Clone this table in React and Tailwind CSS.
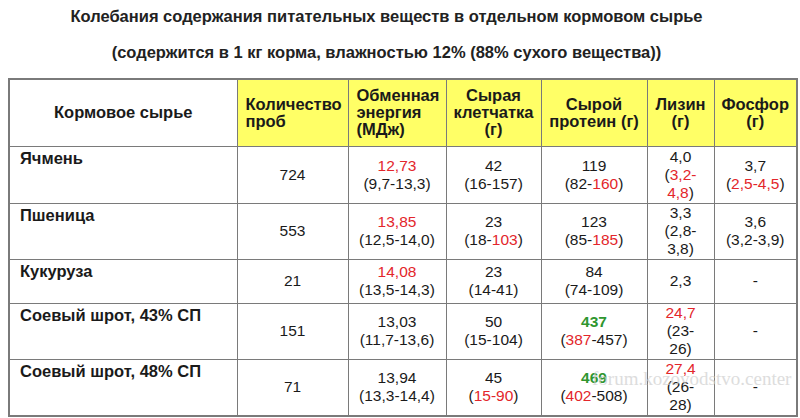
import React from 'react'

const R = ({ children }) => <span className="text-[#e3262b]">{children}</span>
const G = ({ children }) => <span className="font-bold text-[#2f962f]">{children}</span>

const rows = [
  {
    name: 'Ячмень',
    h: 'h-[57px]',
    n: '724',
    en: [<R key="a">12,73</R>, '(9,7-13,3)'],
    fib: ['42', '(16-157)'],
    prot: ['119', <>(82-<R>160</R>)</>],
    lys: ['4,0', <>(<R>3,2-</R></>, <><R>4,8</R>)</>],
    ph: ['3,7', <>(<R>2,5-4,5</R>)</>],
  },
  {
    name: 'Пшеница',
    h: 'h-[56px]',
    n: '553',
    en: [<R key="a">13,85</R>, '(12,5-14,0)'],
    fib: ['23', <>(18-<R>103</R>)</>],
    prot: ['123', <>(85-<R>185</R>)</>],
    lys: ['3,3', '(2,8-', '3,8)'],
    ph: ['3,6', '(3,2-3,9)'],
  },
  {
    name: 'Кукуруза',
    h: 'h-[44px]',
    n: '21',
    en: [<R key="a">14,08</R>, '(13,5-14,3)'],
    fib: ['23', '(14-41)'],
    prot: ['84', '(74-109)'],
    lys: ['2,3'],
    ph: ['-'],
  },
  {
    name: 'Соевый шрот, 43% СП',
    h: 'h-[56px]',
    n: '151',
    en: ['13,03', '(11,7-13,6)'],
    fib: ['50', '(15-104)'],
    prot: [<G key="a">437</G>, <>(<R>387</R>-457)</>],
    lys: [<R key="a">24,7</R>, '(23-', '26)'],
    ph: ['-'],
  },
  {
    name: 'Соевый шрот, 48% СП',
    h: 'h-[57px]',
    n: '71',
    en: ['13,94', '(13,3-14,4)'],
    fib: ['45', <>(<R>15-90</R>)</>],
    prot: [<G key="a">469</G>, <>(<R>402</R>-508)</>],
    lys: [<R key="a">27,4</R>, '(26-', '28)'],
    ph: ['-'],
  },
]

function Lines({ items }) {
  return items.map((t, i) => <div key={i}>{t}</div>)
}

const th = 'border border-[#7a7a7a] bg-[#ffff66] font-bold align-middle leading-[17px] text-[16.5px] p-0'
const td = 'border border-[#7a7a7a] text-center align-middle leading-[18px] p-0'

export default function App() {
  return (
    <div className="relative w-[800px] h-[418px] bg-white text-[15.5px] text-[#1a1a1a] overflow-hidden" style={{ fontFamily: '"Liberation Sans", Arial, sans-serif' }}>
      <div className="w-[773px] pt-[6px] text-center font-bold text-[16.5px] leading-[20px] text-[#222]">
        <div>Колебания содержания питательных веществ в отдельном кормовом сырье</div>
        <div className="mt-[16px]">(содержится в 1 кг корма, влажностью 12% (88% сухого вещества))</div>
      </div>

      <table className="ml-[8px] mt-[16px] w-[788px] table-fixed border-collapse border-2 border-[#7a7a7a]">
        <colgroup>
          <col className="w-[228px]" />
          <col className="w-[111px]" />
          <col className="w-[98px]" />
          <col className="w-[95px]" />
          <col className="w-[106px]" />
          <col className="w-[67px]" />
          <col className="w-[83px]" />
        </colgroup>
        <thead>
          <tr className="h-[67px]">
            <th className={`${th} bg-white text-center`}>Кормовое сырье</th>
            <th className={`${th} text-left pl-[8px]`}>Количество<br />проб</th>
            <th className={`${th} text-left pl-[8px]`}>Обменная<br />энергия<br />(МДж)</th>
            <th className={`${th} text-center`}>Сырая<br />клетчатка<br />(г)</th>
            <th className={`${th} text-center`}>Сырой<br />протеин (г)</th>
            <th className={`${th} text-center`}>Лизин<br />(г)</th>
            <th className={`${th} text-center`}>Фосфор<br />(г)</th>
          </tr>
        </thead>
        <tbody>
          {rows.map((r) => (
            <tr key={r.name} className={r.h}>
              <td className="border border-[#7a7a7a] align-top text-left font-bold text-[16.5px] pl-[10px] pt-[2px] leading-[18px]">{r.name}</td>
              <td className={td}>{r.n}</td>
              <td className={td}><Lines items={r.en} /></td>
              <td className={td}><Lines items={r.fib} /></td>
              <td className={td}><Lines items={r.prot} /></td>
              <td className={td}><Lines items={r.lys} /></td>
              <td className={td}><Lines items={r.ph} /></td>
            </tr>
          ))}
        </tbody>
      </table>

      <div className="absolute left-[592px] top-[369px] text-[19px] leading-none text-[#cfcfcf] opacity-70 pointer-events-none" style={{ fontFamily: '"Liberation Serif", "Times New Roman", serif' }}>
        forum.kozovodstvo.center
      </div>
    </div>
  )
}
